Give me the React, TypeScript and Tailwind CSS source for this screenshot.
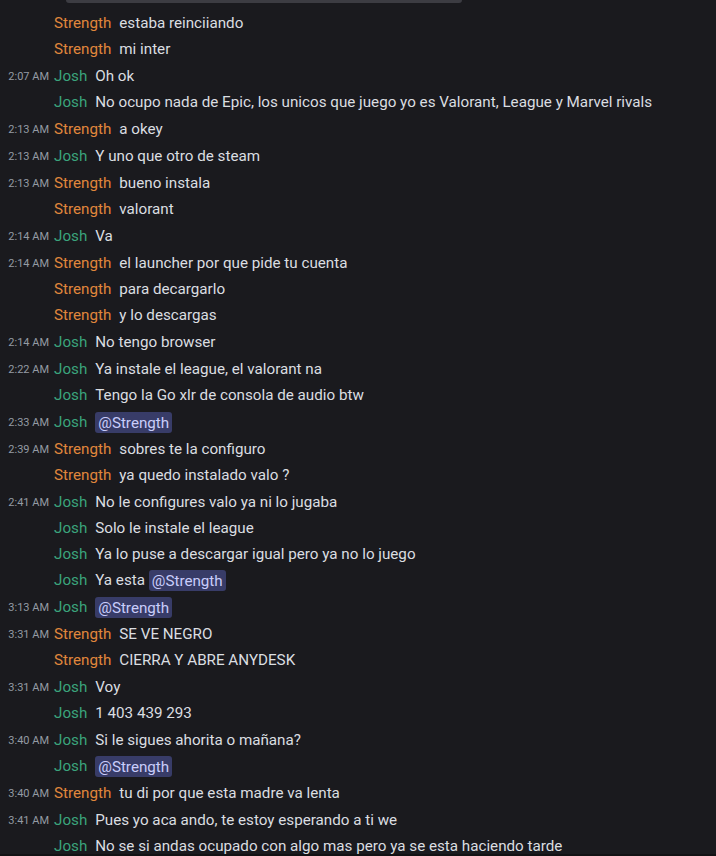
import React from "react";

type Msg = { time?: string; who: "Strength" | "Josh"; text: string; mention?: boolean };

const messages: Msg[] = [
  { who: "Strength", text: "estaba reinciiando" },
  { who: "Strength", text: "mi inter" },
  { time: "2:07 AM", who: "Josh", text: "Oh ok" },
  { who: "Josh", text: "No ocupo nada de Epic, los unicos que juego yo es Valorant, League y Marvel rivals" },
  { time: "2:13 AM", who: "Strength", text: "a okey" },
  { time: "2:13 AM", who: "Josh", text: "Y uno que otro de steam" },
  { time: "2:13 AM", who: "Strength", text: "bueno instala" },
  { who: "Strength", text: "valorant" },
  { time: "2:14 AM", who: "Josh", text: "Va" },
  { time: "2:14 AM", who: "Strength", text: "el launcher por que pide tu cuenta" },
  { who: "Strength", text: "para decargarlo" },
  { who: "Strength", text: "y lo descargas" },
  { time: "2:14 AM", who: "Josh", text: "No tengo browser" },
  { time: "2:22 AM", who: "Josh", text: "Ya instale el league, el valorant na" },
  { who: "Josh", text: "Tengo la Go xlr de consola de audio btw" },
  { time: "2:33 AM", who: "Josh", text: "", mention: true },
  { time: "2:39 AM", who: "Strength", text: "sobres te la configuro" },
  { who: "Strength", text: "ya quedo instalado valo ?" },
  { time: "2:41 AM", who: "Josh", text: "No le configures valo ya ni lo jugaba" },
  { who: "Josh", text: "Solo le instale el league" },
  { who: "Josh", text: "Ya lo puse a descargar igual pero ya no lo juego" },
  { who: "Josh", text: "Ya esta", mention: true },
  { time: "3:13 AM", who: "Josh", text: "", mention: true },
  { time: "3:31 AM", who: "Strength", text: "SE VE NEGRO" },
  { who: "Strength", text: "CIERRA Y ABRE ANYDESK" },
  { time: "3:31 AM", who: "Josh", text: "Voy" },
  { who: "Josh", text: "1 403 439 293" },
  { time: "3:40 AM", who: "Josh", text: "Si le sigues ahorita o mañana?" },
  { who: "Josh", text: "", mention: true },
  { time: "3:40 AM", who: "Strength", text: "tu di por que esta madre va lenta" },
  { time: "3:41 AM", who: "Josh", text: "Pues yo aca ando, te estoy esperando a ti we" },
  { who: "Josh", text: "No se si andas ocupado con algo mas pero ya se esta haciendo tarde" },
];

function Row({ m }: { m: Msg }) {
  const nameColor = m.who === "Strength" ? "text-[#e0873c]" : "text-[#3ba47c]";
  return (
    <div className={`flex h-[26px] items-center ${m.time ? "mt-px" : ""}`}>
      <div className="w-[49px] shrink-0 pt-[2px] text-right text-[11px] text-[#949ba4]">{m.time}</div>
      <div className="ml-[5px] whitespace-pre text-[15.2px] leading-[22px] text-[#dbdee1]">
        <span className={`mr-[8px] ${nameColor}`}>{m.who}</span>
        {m.text}
        {m.text && m.mention ? " " : ""}
        {m.mention && (
          <span className="rounded-[3px] bg-[#383c68] px-[3px] py-[1.5px] text-[#c9cdfb]">@Strength</span>
        )}
      </div>
    </div>
  );
}

export default function App() {
  return (
    <div className="relative h-[856px] w-[716px] overflow-hidden bg-[#1a1a1e] font-['Roboto',sans-serif]">
      <div className="absolute left-[66px] top-0 h-[3px] w-[396px] rounded-b-[4px] bg-[#3c3c42]" />
      <div className="pt-[10px]">
        {messages.map((m, i) => (
          <Row key={i} m={m} />
        ))}
      </div>
      <div className="absolute bottom-0 left-0 h-[2px] w-full bg-[#121214]" />
    </div>
  );
}
